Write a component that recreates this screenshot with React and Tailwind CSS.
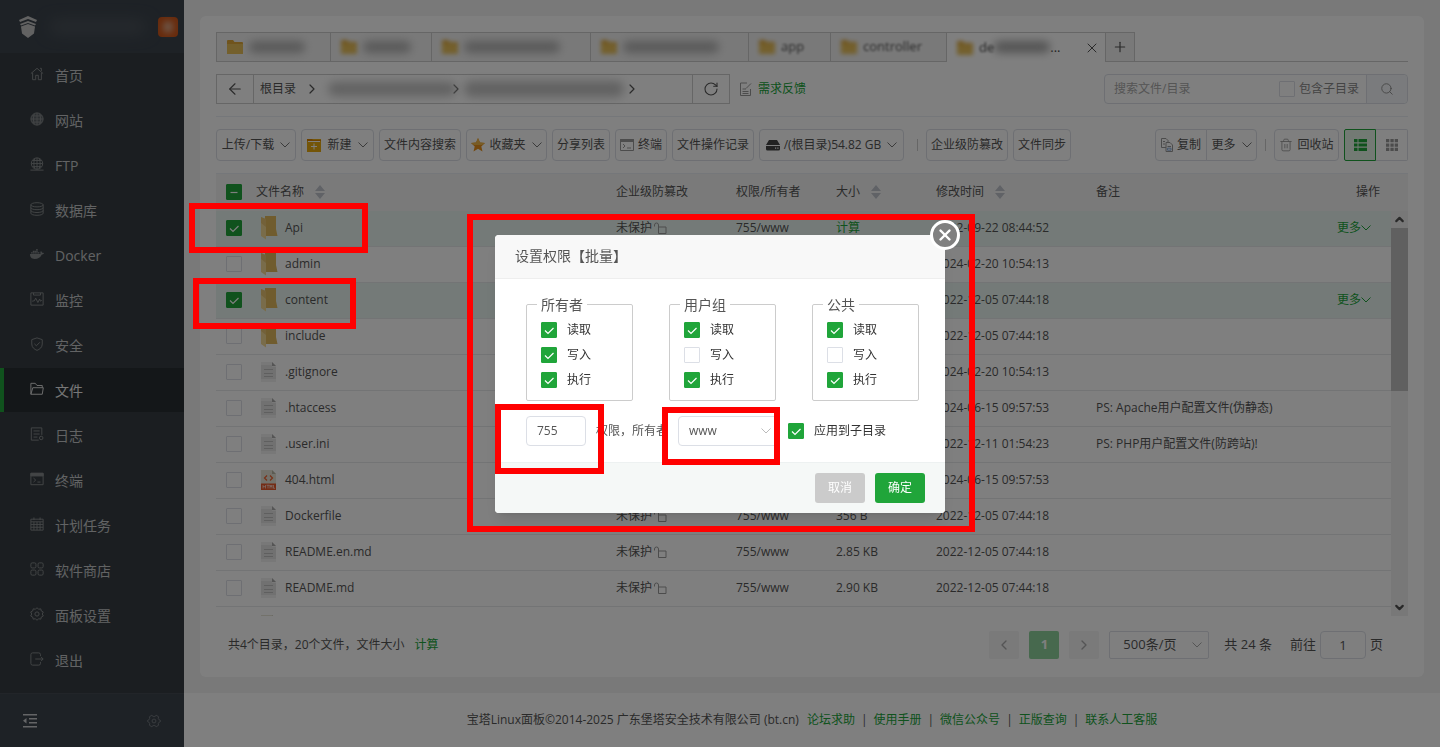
import React from 'react'
import { ArrowLeft, ChevronDown, ChevronLeft, ChevronRight, ChevronUp, Plus, RotateCw, Search, Trash2, X } from 'lucide-react'
import { FaDocker } from 'react-icons/fa'
import clsx from 'clsx'

const navIcons = {
  home: <path d="M1 7.5 8 1.5l7 6M3 6.5v8h3.5v-5h3v5H13v-8M11.5 1.5h1.5v3" />,
  site: (
    <>
      <circle cx="8" cy="8" r="7" fill="currentColor" fillOpacity=".45" />
      <path d="M1 8h14M8 1v14M2.5 4.5h11M2.5 11.5h11M5 2c-1.5 4-1.5 8 0 12M11 2c1.5 4 1.5 8 0 12" />
    </>
  ),
  ftp: (
    <>
      <circle cx="8" cy="7.5" r="6.5" />
      <path d="M1.5 7.5h13M8 1v13M3 4h10M3 11h10M5.5 2c-1.5 4-1.5 7 0 11M10.5 2c1.5 4 1.5 7 0 11M.5 15h15" />
    </>
  ),
  database: (
    <>
      <ellipse cx="8" cy="3.2" rx="7" ry="2.4" />
      <path d="M1 3.2v9.6c0 3.2 14 3.2 14 0V3.2M1 6.4c0 3.2 14 3.2 14 0M1 9.6c0 3.2 14 3.2 14 0" />
    </>
  ),
  monitor: <path d="M1 1h14v14H1zM4 1v2.5h8V1M2.5 10.5 5 10l1.5-3 2.5 5 2-4 1 2.5 1.5-1" />,
  shield: <path d="M8 1 14 3v5c0 4-3 6-6 7.3C5 14 2 12 2 8V3zM5 7.8l2.3 2.2 4-4" />,
  folder: <path d="M1 14V1.5h5L8 4h6v2.5M1 14 3.2 6.5H15.2L14 14z" />,
  log: (
    <>
      <path d="M10 15H1.5V1h12v8M4 4.5h7M4 8h7M4 11.5h4.5" />
      <circle cx="12.8" cy="12.5" r="2" />
    </>
  ),
  terminal: (
    <>
      <path d="M1 1.5h14v13H1z" />
      <path d="M1 1.5h14v3H1z" fill="currentColor" />
      <path d="m4 7 2.5 2.2L4 11.5M8.5 11.5H12" />
    </>
  ),
  cron: <path d="M1 2.5h14v12.5H1zM1 5.5h14M1 8.5h14M1 11.7h14M4.5 5.5V15M8 5.5V15M11.5 5.5V15M4.5.5v3M11.5.5v3" />,
  shop: (
    <>
      <rect x="1" y="1" width="5.8" height="5.8" rx="1.5" />
      <rect x="9.2" y="1" width="5.8" height="5.8" rx="1.5" />
      <rect x="1" y="9.2" width="5.8" height="5.8" rx="1.5" />
      <rect x="9.2" y="9.2" width="5.8" height="5.8" rx="1.5" />
    </>
  ),
  gear: (
    <>
      <path d="m8 .8 1.8 1.8 2.5-.5.6 2.4 2.3 1.2L14 8l1.2 2.3-2.3 1.2-.6 2.4-2.5-.5L8 15.2l-1.8-1.8-2.5.5-.6-2.4-2.3-1.2L2 8 .8 5.7l2.3-1.2.6-2.4 2.5.5z" />
      <circle cx="8" cy="8" r="2.4" />
    </>
  ),
  hexGear: (
    <>
      <path d="M5.5 1.5 7 2.8h2l1.5-1.3 2.7 1.6-.3 2 1 1.6 1.6.8v1l-1.6.8-1 1.6.3 2-2.7 1.6L9 13.2H7l-1.5 1.3-2.7-1.6.3-2-1-1.6L.5 8.5v-1L2.1 6.7l1-1.6-.3-2z" />
      <circle cx="8" cy="8" r="2.2" />
    </>
  ),
  exit: <path d="M12 4.5V3q0-2-2-2H3Q1 1 1 3v10q0 2 2 2h7q2 0 2-2v-1.5M6 8h9M12.500 5.500 15 8l-2.500 2.500" />,
}

const menu = [
  { label: '首页', icon: 'home' },
  { label: '网站', icon: 'site' },
  { label: 'FTP', icon: 'ftp' },
  { label: '数据库', icon: 'database' },
  { label: 'Docker', icon: 'docker' },
  { label: '监控', icon: 'monitor' },
  { label: '安全', icon: 'shield' },
  { label: '文件', icon: 'folder', active: true },
  { label: '日志', icon: 'log' },
  { label: '终端', icon: 'terminal' },
  { label: '计划任务', icon: 'cron' },
  { label: '软件商店', icon: 'shop' },
  { label: '面板设置', icon: 'gear' },
  { label: '退出', icon: 'exit' },
]

const files = [
  { name: 'Api', type: 'dir', size: '计算', time: '2022-09-22 08:44:52', checked: true },
  { name: 'admin', type: 'dir', time: '2024-02-20 10:54:13' },
  { name: 'content', type: 'dir', time: '2022-12-05 07:44:18', checked: true },
  { name: 'include', type: 'dir', time: '2022-12-05 07:44:18' },
  { name: '.gitignore', type: 'file', time: '2024-02-20 10:54:13' },
  { name: '.htaccess', type: 'file', time: '2024-06-15 09:57:53', note: 'PS: Apache用户配置文件(伪静态)' },
  { name: '.user.ini', type: 'file', time: '2022-12-11 01:54:23', note: 'PS: PHP用户配置文件(防跨站)!' },
  { name: '404.html', type: 'html', time: '2024-06-15 09:57:53' },
  { name: 'Dockerfile', type: 'file', size: '356 B', time: '2022-12-05 07:44:18' },
  { name: 'README.en.md', type: 'file', size: '2.85 KB', time: '2022-12-05 07:44:18' },
  { name: 'README.md', type: 'file', size: '2.90 KB', time: '2022-12-05 07:44:18' },
]

const tabs = [
  { width: 'w-[114px]', text: 'w-14' },
  { width: 'w-[101px]', text: 'w-12' },
  { width: 'w-[159px]', text: 'w-24' },
  { width: 'w-[158px]', text: 'w-24' },
  { width: 'w-[82px]', label: 'app' },
  { width: 'w-[116px]', label: 'controller' },
]

const permissionGroups = [
  { title: '所有者', read: true, write: true, exec: true },
  { title: '用户组', read: true, write: false, exec: true },
  { title: '公共', read: true, write: false, exec: true },
]

const footerLinks = ['论坛求助', '使用手册', '微信公众号', '正版查询', '联系人工客服']

const NavIcon = ({ name, className }) => {
  if (name === 'docker') return <FaDocker className={className} />
  return (
    <svg viewBox="0 0 16 16" fill="none" stroke="currentColor" strokeWidth="1.1" className={className}>
      {navIcons[name]}
    </svg>
  )
}

const DownArrow = ({ className }) => (
  <svg viewBox="0 0 10 6" fill="none" stroke="currentColor" className={clsx('h-1.5 w-2.5 shrink-0', className)}>
    <path d="M.5.5 5 5 9.500.5" />
  </svg>
)

const Checkbox = ({ checked, partial, label, className }) => (
  <span className={clsx('grid size-4 shrink-0', className)}>
    <input
      type="checkbox"
      aria-label={label}
      defaultChecked={checked}
      className="col-start-1 row-start-1 size-4 appearance-none rounded-[1px] border border-[#dcdfe6] bg-white checked:border-[#20a53a] checked:bg-[#20a53a]"
    />
    {checked && (
      <svg viewBox="0 0 16 16" fill="none" stroke="white" strokeWidth="1.2" className="pointer-events-none col-start-1 row-start-1 size-4">
        <path d={partial ? 'M4.500 8.500h7' : 'M4 8.500l3 3 5.500-5.500'} />
      </svg>
    )}
  </span>
)

const FolderTile = ({ className }) => (
  <svg viewBox="0 0 16 14" className={className}>
    <path d="M0 1q0-1 1-1h5l1.500 2H15q1 0 1 1v10q0 1-1 1H1q-1 0-1-1z" fill="#e0a93a" />
    <path d="M0 4h16v9q0 1-1 1H1q-1 0-1-1z" fill="#e8c05a" />
  </svg>
)

const FileIcon = ({ type }) => {
  if (type === 'dir') {
    return (
      <svg viewBox="0 0 17 24" className="h-6 w-[17px]">
        <path d="M4 0h11v13l1.500 7H4z" fill="#e0b95c" />
        <path d="M0 1 5 3v20.500L0 20z" fill="#f3d995" />
        <path d="M0 1 5 3v8L0 7z" fill="#d9ad50" fillOpacity=".5" />
      </svg>
    )
  }
  if (type === 'html') {
    return (
      <svg viewBox="0 0 15 20" className="h-5 w-[15px]">
        <path d="M0 0h11l4 4v16H0z" fill="#e6e4d6" />
        <path d="M11 0v4h4z" fill="#b9b7a5" />
        <path d="M6 5.500 3.500 8 6 10.500M9 5.500 11.500 8 9 10.500" fill="none" stroke="#f0602e" strokeWidth="1.200" />
        <path d="M0 13.500h15V20H0z" fill="#e8592a" />
        <path d="M2 15v3.500M4.500 15v3.500M2 16.700h2.500M5.500 15.200h3M7 15v3.500M9 18.500V15l1 2 1-2v3.500M12.500 15v3.300H14" fill="none" stroke="#fff" strokeWidth=".6" />
      </svg>
    )
  }
  return (
    <svg viewBox="0 0 15 20" className="h-5 w-[15px]">
      <path d="M0 0h11l4 4v16H0z" fill="#f0f0f0" />
      <path d="M0 3h11v2h4v12H0z" fill="#e2e2e2" />
      <path d="M11 0v4h4z" fill="#aaa" />
      <path d="M3 7.500h9M3 11.500h9M3 14.500h9" stroke="#bebebe" />
    </svg>
  )
}

const SortIcon = () => (
  <svg viewBox="0 0 10 14" className="h-3.5 w-2.5 fill-[#c0c4cc]">
    <path d="M5 0l5 6H0zM5 14l5-6H0z" />
  </svg>
)

const LockIcon = () => (
  <svg viewBox="0 0 13 12" fill="none" stroke="#999" className="ml-0.5 h-3 w-[13px]">
    <path d="M4.500 5h7.500v6.500H4.500zM4.500 5V3q0-2-2-2T.5 3v1.500" />
  </svg>
)

const ToolButton = ({ children, arrow, className }) => (
  <button className={clsx('flex h-8 items-center justify-center gap-1 rounded border border-[#dcdfe6] whitespace-nowrap', className)}>
    {children}
    {arrow && <DownArrow className="ml-0.5 text-[#777]" />}
  </button>
)

const Sidebar = () => (
  <aside className="flex w-46 shrink-0 flex-col bg-[#3a4148] text-[#c4c6c8]">
    <div className="flex h-[53px] items-center bg-[#3c444d] pl-[18px]">
      <svg viewBox="0 0 20 22" className="h-[22px] w-5 shrink-0 fill-[#c4c4c4]">
        <path d="M10 0 19 4 18 6 10 3 2 6 1 4zM10 5l8 3-1 1.500-7-2.500-7 2.500L2 8z" />
        <path d="M3 10.500 10 8l7 2.500-1 7L10 22l-6-4.500z" />
      </svg>
      <span className="ml-3 h-2.5 w-24 rounded-full bg-[#555c62] blur-sm" />
      <span className="ml-3 flex size-5 shrink-0 items-center justify-center rounded bg-[#d0571a]">
        <span className="h-3 w-2.5 rounded-full bg-[#d9a98c] blur-[3px]" />
      </span>
    </div>
    <nav className="flex flex-1 flex-col bg-[#363d42] text-sm">
      {menu.map((item) => (
        <a
          key={item.label}
          href="#"
          className={clsx(
            'mb-px flex h-11 items-center gap-[11px] border-l-4 pt-0.5 pl-[26px]',
            item.active ? 'border-[#20a53a] bg-[#292f33] text-[#eee]' : 'border-transparent'
          )}
        >
          <NavIcon name={item.icon} className={clsx('mb-1 size-3.5', item.active ? 'text-[#ddd]' : 'text-[#868a8d]')} />
          {item.label}
        </a>
      ))}
    </nav>
    <div className="flex h-[54px] items-center justify-between border-t border-[#444b52] bg-[#3c444d] px-[23px]">
      <button aria-label="收起菜单">
        <svg viewBox="0 0 14 14" className="size-3.5 fill-[#c8cacc]">
          <path d="M0 0h14v1.500H0zM6 4h8v1.500H6zM6 8h8v1.500H6zM0 12h14v1.500H0zM0 6.700 3.500 4v5.500z" />
        </svg>
      </button>
      <button aria-label="设置">
        <NavIcon name="hexGear" className="size-3.5 text-[#757b80]" />
      </button>
    </div>
  </aside>
)

const FileTabs = () => (
  <div className="flex h-[30px] border-b border-[#ccc]">
    {tabs.map((tab, index) => (
      <button key={index} className={clsx('flex items-center gap-1.5 border-t border-l border-[#ccc] bg-[#f3f3f3] pl-2.5', tab.width)}>
        <FolderTile className={clsx('h-3.5 w-4 shrink-0', index > 0 && 'blur-[2px]')} />
        {tab.label ? (
          <span className="text-[13px] text-[#555] blur-[1px]">{tab.label}</span>
        ) : (
          <span className={clsx('h-3 rounded-full bg-[#b4b4b4] blur-[4px]', tab.text)} />
        )}
      </button>
    ))}
    <button className="-mb-px flex h-[30px] w-[159px] items-center gap-1.5 border-t border-l border-[#ccc] bg-white pl-2.5">
      <FolderTile className="h-3.5 w-4 shrink-0 blur-[2px]" />
      <span className="flex items-center text-[13px] text-[#444]">
        <span className="blur-[1px]">de</span>
        <span className="h-3 w-14 rounded-full bg-[#aaa] blur-[4px]" />
        ...
      </span>
      <X strokeWidth={1.5} className="mr-[5px] ml-auto size-4 shrink-0" />
    </button>
    <button aria-label="新建标签" className="flex w-[30px] items-center justify-center border-x border-t border-[#ccc] bg-[#f3f3f3]">
      <Plus strokeWidth={1.8} className="size-4" />
    </button>
  </div>
)

const PathBar = () => (
  <div className="flex h-[30px] items-center">
    <div className="flex h-[30px] w-[514px] border border-[#ccc]">
      <button aria-label="返回" className="flex w-[37px] items-center justify-center border-r border-[#ccc]">
        <ArrowLeft strokeWidth={1.5} className="size-[18px]" />
      </button>
      <div className="flex flex-1 items-center pl-1.5">
        <a href="#">根目录</a>
        <ChevronRight strokeWidth={1.8} className="mx-2 size-4" />
        <span className="h-3.5 w-32 rounded-full bg-[#c4c4c4] blur-[5px]" />
        <ChevronRight strokeWidth={1.8} className="-ml-2 size-4" />
        <span className="h-4 w-40 rounded-full bg-[#c4c4c4] blur-[5px]" />
        <ChevronRight strokeWidth={1.8} className="size-4" />
      </div>
      <button aria-label="刷新" className="flex w-[37px] items-center justify-center border-l border-[#ccc]">
        <RotateCw strokeWidth={1.6} className="size-4" />
      </button>
    </div>
    <a href="#" className="ml-2.5 flex items-center gap-1.5 text-[#20a53a]">
      <svg viewBox="0 0 12 14" fill="none" stroke="#999" className="h-3.5 w-3">
        <path d="M7 1H.5v12.500h10V7M2.500 7H6M2.500 9.500h6M2.500 11.500h6M6 6.500l5-5" />
      </svg>
      需求反馈
    </a>
    <div className="ml-auto flex h-[30px] w-[304px] items-center rounded border border-[#dcdfe6] text-[#888]">
      <input
        type="text"
        aria-label="搜索文件/目录"
        placeholder="搜索文件/目录"
        className="w-0 min-w-0 flex-1 pl-[9px] outline-none placeholder:text-[#aaa]"
      />
      <label className="flex items-center gap-1 pr-[7px]">
        <Checkbox />
        包含子目录
      </label>
      <button aria-label="搜索" className="flex h-full w-[41px] items-center justify-center rounded-r border-l border-[#dcdfe6] bg-[#f5f7fa]">
        <Search strokeWidth={1.5} className="size-3.5" />
      </button>
    </div>
  </div>
)

const Toolbar = () => (
  <div className="flex items-center gap-[5px]">
    <ToolButton arrow className="w-20">上传/下载</ToolButton>
    <ToolButton arrow className="w-[73px]">
      <svg viewBox="0 0 14 13" className="mr-0.5 h-[13px] w-3.5">
        <path d="M0 0h14v13H0z" fill="#e8ab10" />
        <path d="M0 0h5l1 1h8v1H0z" fill="#d98200" />
        <path d="M1 2.500h12M7 4.500v6M4 7.500h6" stroke="#fff" />
      </svg>
      新建
    </ToolButton>
    <ToolButton className="w-[82px]">文件内容搜索</ToolButton>
    <ToolButton arrow className="w-[81px]">
      <svg viewBox="0 0 14 14" className="size-3.5">
        <path d="m7 0 2 4.600 5 .4-3.700 3.400 1.200 5L7 10.800l-4.500 2.600 1.200-5L0 5l5-.4z" fill="#e8901c" />
        <path d="m7 0 2 4.600 5 .4-3 2H3L0 5l5-.4z" fill="#f0b84c" />
      </svg>
      收藏夹
    </ToolButton>
    <ToolButton className="w-[58px]">分享列表</ToolButton>
    <ToolButton className="w-[52px]">
      <svg viewBox="0 0 14 12" fill="none" stroke="#999" className="h-3 w-3.5">
        <path d="M.5.5h13v11H.5z" />
        <path d="M.5.5h13v2H.5z" fill="#999" />
        <path d="m3 5 2 2-2 2M7 9h4" />
      </svg>
      终端
    </ToolButton>
    <ToolButton className="w-[82px]">文件操作记录</ToolButton>
    <ToolButton arrow className="w-[145px]">
      <svg viewBox="0 0 14 11" className="h-[11px] w-3.5 fill-[#444]">
        <path d="M3 0h8l3 5H0zM0 6h14v3q0 1.500-1.500 1.500h-11Q0 10.500 0 9z" />
        <path d="M9 7.500h1.200v1.200H9zM11.300 7.500h1.200v1.200h-1.200z" fill="#fff" />
      </svg>
      /(根目录)54.82 GB
    </ToolButton>
    <span className="mr-[3px] ml-2 h-3 w-px bg-[#ccc]" />
    <ToolButton className="w-[82px]">企业级防篡改</ToolButton>
    <ToolButton className="w-[58px]">文件同步</ToolButton>

    <div className="ml-auto flex">
      <ToolButton className="w-[52px] rounded-r-none">
        <svg viewBox="0 0 12 14" fill="none" stroke="#999" className="h-3.5 w-3">
          <path d="M5 9.500H.5V.5H5l2 2V4M2 3.500h2M2 6h2" />
          <path d="M5 4.500h4l2.500 2.500v6.500H5zM6.500 8.500H10" />
          <path d="M6.500 10.200H10v2H6.500z" stroke="#8aaede" />
        </svg>
        复制
      </ToolButton>
      <ToolButton arrow className="-ml-px w-[51px] rounded-l-none">更多</ToolButton>
    </div>
    <span className="mx-[3px] h-3 w-px bg-[#ccc]" />
    <ToolButton className="w-[65px]">
      <Trash2 strokeWidth={1.5} className="size-3.5 text-[#999]" />
      回收站
    </ToolButton>
    <div className="flex">
      <button aria-label="列表视图" className="flex size-8 items-center justify-center rounded-l-xs border border-[#20a53a] bg-[#e6f4e9]">
        <svg viewBox="0 0 13 12" className="h-3 w-[13px] fill-[#20a53a]">
          <path d="M0 0h3.500v3.200H0zM4.500 0H13v3.200H4.500zM0 4.400h3.500v3.200H0zM4.500 4.400H13v3.200H4.500zM0 8.800h3.500V12H0zM4.500 8.800H13V12H4.500z" />
        </svg>
      </button>
      <button aria-label="图标视图" className="flex size-8 items-center justify-center rounded-r-xs border border-l-0 border-[#dcdfe6]">
        <svg viewBox="0 0 12 12" className="size-3 fill-[#999]">
          <path d="M0 0h3.300v3.300H0zM4.400 0h3.300v3.300H4.400zM8.700 0H12v3.300H8.700zM0 4.400h3.300v3.300H0zM4.400 4.400h3.300v3.300H4.400zM8.700 4.400H12v3.300H8.700zM0 8.700h3.300V12H0zM4.400 8.700h3.300V12H4.400zM8.700 8.700H12V12H8.700z" />
        </svg>
      </button>
    </div>
  </div>
)

const Columns = () => (
  <colgroup>
    <col className="w-10" />
    <col className="w-[360px]" />
    <col className="w-[120px]" />
    <col className="w-[100px]" />
    <col className="w-[100px]" />
    <col className="w-[160px]" />
    <col />
    <col className="w-20" />
  </colgroup>
)

const FileTable = () => (
  <div className="flex min-h-0 flex-1 flex-col">
    <table className="w-full shrink-0 table-fixed bg-[#f5f5f5] text-left">
      <Columns />
      <thead>
        <tr className="h-[37px] border-t border-[#ebeef5] *:font-normal">
          <th className="pl-2.5"><Checkbox checked partial label="全选" /></th>
          <th><span className="flex items-center gap-[11px]">文件名称<SortIcon /></span></th>
          <th>企业级防篡改</th>
          <th>权限/所有者</th>
          <th><span className="flex items-center gap-[11px]">大小<SortIcon /></span></th>
          <th><span className="flex items-center gap-[11px]">修改时间<SortIcon /></span></th>
          <th>备注</th>
          <th className="pr-7 text-right">操作</th>
        </tr>
      </thead>
    </table>
    <div className="flex min-h-0 flex-1">
      <div className="min-w-0 flex-1 overflow-hidden">
        <table className="w-full table-fixed border-separate border-spacing-0">
          <Columns />
          <tbody>
            {files.map((file) => (
              <tr key={file.name} className={clsx('h-9 *:border-b *:border-[#e6e8eb]', file.checked && 'bg-[#e9f5f1]')}>
                <td className="pl-2.5"><Checkbox checked={file.checked} label={file.name} /></td>
                <td>
                  <span className="flex h-[35px] items-center pl-[5px]">
                    <span className="w-6"><FileIcon type={file.type} /></span>
                    {file.name}
                  </span>
                </td>
                <td><span className="flex items-center">未保护<LockIcon /></span></td>
                <td>755/www</td>
                <td>{file.size === '计算' ? <a href="#" className="text-[#20a53a]">计算</a> : file.size}</td>
                <td>{file.time}</td>
                <td className="whitespace-nowrap">{file.note}</td>
                <td className="pr-5">
                  {file.checked && (
                    <a href="#" className="flex items-center justify-end text-[#20a53a]">
                      更多
                      <DownArrow />
                    </a>
                  )}
                </td>
              </tr>
            ))}
            <tr className="h-9 align-top">
              <td />
              <td className="pt-2 pl-[5px]"><FileIcon type="html" /></td>
            </tr>
          </tbody>
        </table>
      </div>
      <div className="flex w-[17px] flex-col items-center bg-[#f1f1f1]">
        <ChevronUp strokeWidth={4} className="my-0.5 size-[13px] text-[#555]" />
        <div className="h-[163px] w-full bg-[#c1c1c1]" />
        <ChevronDown strokeWidth={4} className="mt-auto mb-0.5 size-[13px] text-[#505050]" />
      </div>
    </div>
  </div>
)

const Pagination = () => (
  <div className="flex h-[61px] shrink-0 items-center pr-[25px] pb-[3px] pl-3">
    <span>共4个目录，20个文件，文件大小</span>
    <a href="#" className="ml-2.5 text-[#20a53a]">计算</a>
    <div className="ml-auto flex items-center text-[13px]">
      <button aria-label="上一页" className="flex h-7 w-[30px] items-center justify-center rounded-xs bg-[#f4f4f5] text-[#aaa]">
        <ChevronLeft strokeWidth={2} className="size-4" />
      </button>
      <button className="mx-2.5 h-7 w-[30px] rounded-xs bg-[#8fd29c] font-bold text-white">1</button>
      <button aria-label="下一页" className="flex h-7 w-[30px] items-center justify-center rounded-xs bg-[#f4f4f5] text-[#aaa]">
        <ChevronRight strokeWidth={2} className="size-4" />
      </button>
      <div className="ml-2.5 grid w-[100px] items-center">
        <select aria-label="每页条数" className="col-start-1 row-start-1 h-7 appearance-none rounded-xs border border-[#dcdfe6] pl-[13px]">
          <option>500条/页</option>
        </select>
        <DownArrow className="pointer-events-none col-start-1 row-start-1 mr-[7px] justify-self-end text-[#aaa]" />
      </div>
      <span className="ml-[15px]">共 24 条</span>
      <label className="ml-[18px] flex items-center gap-1">
        前往
        <input type="text" defaultValue="1" className="h-7 w-[46px] rounded border border-[#dcdfe6] text-center" />
        页
      </label>
    </div>
  </div>
)

const PermissionModal = () => (
  <div role="dialog" aria-label="设置权限" className="relative w-[450px] rounded bg-white text-[#555] shadow-lg">
    <h2 className="flex h-11 items-center rounded-t border-b border-[#eee] bg-[#f8f8f8] pl-5 text-sm">设置权限【批量】</h2>
    <button
      aria-label="关闭"
      className="absolute -top-[15px] -right-[15px] flex size-[30px] items-center justify-center rounded-full border-[3px] border-white bg-[#808080] text-white"
    >
      <X strokeWidth={3.2} className="size-[18px]" />
    </button>

    <div className="py-4 pl-[31px]">
      <div className="flex gap-9">
        {permissionGroups.map((group) => (
          <fieldset key={group.title} className="w-[107px] shrink-0 rounded-xs border border-[#ccc] px-2.5 pb-[7px]">
            <legend className="px-1 text-sm">{group.title}</legend>
            <div className="pt-[3px] pl-1 text-[#333]">
              <label className="flex h-[25px] items-center gap-2.5"><Checkbox checked={group.read} />读取</label>
              <label className="flex h-[25px] items-center gap-2.5"><Checkbox checked={group.write} />写入</label>
              <label className="flex h-[25px] items-center gap-2.5"><Checkbox checked={group.exec} />执行</label>
            </div>
          </fieldset>
        ))}
      </div>
      <div className="mt-[15px] flex items-center gap-2.5 whitespace-nowrap">
        <input type="text" aria-label="权限" defaultValue="755" className="h-[30px] w-[60px] rounded border border-[#dcdfe6] pl-2.5" />
        <label htmlFor="owner">权限，所有者</label>
        <div className="grid w-[100px] items-center">
          <select id="owner" className="col-start-1 row-start-1 h-[30px] appearance-none rounded border border-[#dcdfe6] pl-2.5">
            <option>www</option>
          </select>
          <DownArrow className="pointer-events-none col-start-1 row-start-1 mr-[7px] justify-self-end text-[#bbb]" />
        </div>
        <label className="flex items-center gap-2.5 text-[#333]"><Checkbox checked />应用到子目录</label>
      </div>
    </div>

    <div className="flex justify-end gap-2.5 rounded-b border-t border-[#edf1f1] bg-[#f5f8f7] px-5 py-2.5 text-white">
      <button className="h-[30px] w-[50px] rounded-[3px] bg-[#cbcbcb]">取消</button>
      <button className="h-[30px] w-[50px] rounded-[3px] bg-[#20a53a]">确定</button>
    </div>

    {/* Highlight frames */}
    <div className="pointer-events-none absolute -top-[21px] -left-7 h-[318px] w-[508px] border-6 border-[#f00]" />
    <div className="pointer-events-none absolute top-[169px] left-0 h-[70px] w-[109px] border-6 border-[#f00]" />
    <div className="pointer-events-none absolute top-[172px] left-[167px] h-[58px] w-[118px] border-6 border-[#f00]" />
  </div>
)

export default function App() {
  return (
    <div className="relative flex h-screen overflow-hidden bg-[#f2f2f2] font-['Open_Sans','Noto_Sans_CJK_SC',sans-serif] text-xs text-[#555]">
      <Sidebar />
      <div className="flex min-w-0 flex-1 flex-col">
        <main className="m-4 flex min-h-0 flex-1 flex-col rounded-md bg-white px-4 pt-4">
          <FileTabs />
          <div className="border-b border-[#ebeef5] py-3"><PathBar /></div>
          <div className="py-3"><Toolbar /></div>
          <FileTable />
          <Pagination />
        </main>
        <footer className="flex h-[54px] shrink-0 items-center justify-center bg-white">
          <span className="mr-2">宝塔Linux面板©2014-2025 广东堡塔安全技术有限公司 (bt.cn)</span>
          {footerLinks.map((link, index) => (
            <React.Fragment key={link}>
              {index > 0 && <span className="mx-1.5">|</span>}
              <a href="#" className="text-[#20a53a]">{link}</a>
            </React.Fragment>
          ))}
        </footer>
      </div>

      {/* Backdrop */}
      <div className="fixed inset-0 flex items-center justify-center bg-black/50">
        <PermissionModal />
      </div>
      <div className="pointer-events-none absolute top-[203px] left-[189px] h-[50px] w-[179px] border-6 border-[#f00]" />
      <div className="pointer-events-none absolute top-[278px] left-[193px] h-[51px] w-[163px] border-6 border-[#f00]" />
    </div>
  )
}
